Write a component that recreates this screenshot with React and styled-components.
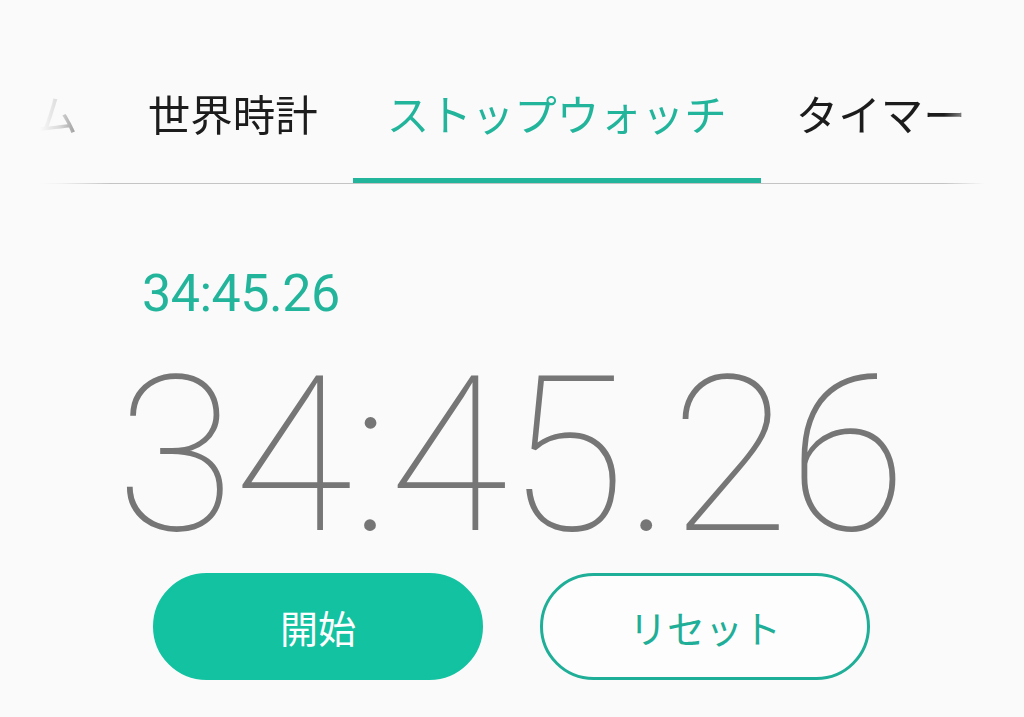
import React from "react";
import styled, { createGlobalStyle } from "styled-components";

const GlobalStyle = createGlobalStyle`
  html, body {
    margin: 0;
    padding: 0;
    background: #fafafa;
  }
  body {
    font-family: Roboto, "Noto Sans CJK JP", sans-serif;
  }
`;

const Page = styled.div`
  width: 1024px;
  height: 717px;
  overflow: hidden;
  background: #fafafa;
  display: flex;
  flex-direction: column;
`;

const TabBar = styled.div`
  margin: 70px 40px 0 40px;
  overflow: hidden;
  position: relative;
  -webkit-mask-image: linear-gradient(
    to right,
    transparent 0,
    rgba(0, 0, 0, 0.15) 20px,
    #000 70px,
    #000 calc(100% - 40px),
    transparent 100%
  );
  mask-image: linear-gradient(
    to right,
    transparent 0,
    rgba(0, 0, 0, 0.15) 20px,
    #000 70px,
    #000 calc(100% - 40px),
    transparent 100%
  );
  border-bottom: 1px solid #c4c4c4;
`;

const TabStrip = styled.div`
  display: flex;
  margin-left: -166px;
`;

const Tab = styled.div`
  flex: none;
  padding: 0 ${(p) => (p.$active ? 34 : 35)}px;
  height: 113px;
  display: flex;
  align-items: flex-start;
  font-family: "Noto Sans CJK JP", sans-serif;
  font-size: 42.5px;
  line-height: 86px;
  white-space: nowrap;
  color: ${(p) => (p.$active ? "#22b59b" : "#1c1c1c")};
  position: relative;

  &::after {
    content: "";
    display: ${(p) => (p.$active ? "block" : "none")};
    position: absolute;
    left: 0;
    right: 0;
    bottom: -1px;
    height: 6px;
    background: #22b59b;
  }
`;

const Body = styled.div`
  display: flex;
  flex-direction: column;
  padding: 0 0 0 120px;
`;

const LapTime = styled.div`
  margin-top: 80px;
  margin-left: 22px;
  font-family: Roboto, sans-serif;
  font-size: 52px;
  line-height: 60px;
  color: #22b59b;
  letter-spacing: -0.5px;
`;

const MainTime = styled.div`
  margin-top: 42px;
  margin-left: -4px;
  font-family: Roboto, sans-serif;
  font-weight: 100;
  font-size: 217px;
  line-height: 180px;
  color: #767676;
  letter-spacing: -1px;
  white-space: nowrap;
`;

const Buttons = styled.div`
  display: flex;
  gap: 57px;
  margin-top: 27px;
  margin-left: 33px;
`;

const PillButton = styled.button`
  width: 330px;
  height: 107px;
  border-radius: 54px;
  box-sizing: border-box;
  font-family: "Noto Sans CJK JP", sans-serif;
  font-size: 38px;
  cursor: pointer;
  border: 3px solid #1fae97;
  background: ${(p) => (p.$filled ? "#12c2a1" : "#fdfdfd")};
  border-color: ${(p) => (p.$filled ? "#12c2a1" : "#1fae97")};
  color: ${(p) => (p.$filled ? "#ffffff" : "#1fae97")};
  display: flex;
  align-items: center;
  justify-content: center;
  padding: 0;
`;

const tabs = [
  { label: "アラーム" },
  { label: "世界時計" },
  { label: "ストップウォッチ", active: true },
  { label: "タイマー" },
];

export default function App() {
  return (
    <Page>
      <GlobalStyle />
      <TabBar>
        <TabStrip>
          {tabs.map((t) => (
            <Tab key={t.label} $active={t.active}>
              {t.label}
            </Tab>
          ))}
        </TabStrip>
      </TabBar>
      <Body>
        <LapTime>34:45.26</LapTime>
        <MainTime>34:45.26</MainTime>
        <Buttons>
          <PillButton $filled>開始</PillButton>
          <PillButton>リセット</PillButton>
        </Buttons>
      </Body>
    </Page>
  );
}
